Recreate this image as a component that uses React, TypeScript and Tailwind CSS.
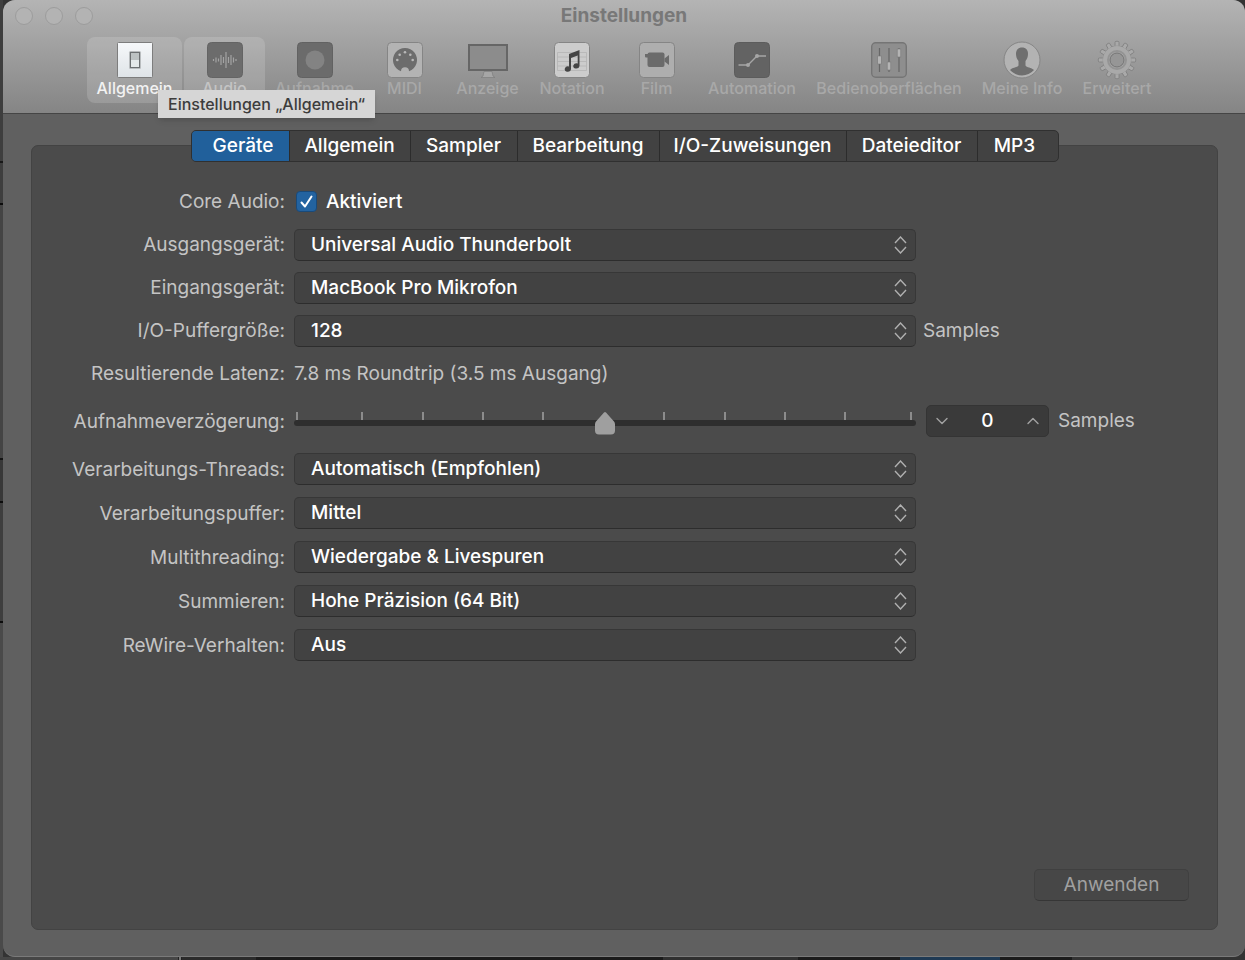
import React, { useState } from 'react';
import { ChevronDown, ChevronUp, Check } from 'lucide-react';
import clsx from 'clsx';

const GeneralIcon = () => (
  <svg width="36" height="36" viewBox="0 0 36 36">
    <defs>
      <linearGradient id="paper" x1="0" y1="0" x2="0" y2="1">
        <stop offset="0" stopColor="#f6f8fa" />
        <stop offset="1" stopColor="#dfe4e8" />
      </linearGradient>
    </defs>
    <rect x="0.5" y="0.5" width="35" height="35" rx="1" fill="url(#paper)" stroke="#7d7d7d" />
    <rect x="12" y="9" width="12" height="18" rx="1.500" fill="#b9bdbf" />
    <rect x="14" y="11" width="8" height="14" fill="#e4e9ea" />
    <rect x="14" y="11" width="8" height="7" fill="#bcc2c3" />
    <rect x="13.5" y="10.5" width="9" height="15" fill="none" stroke="#6c7072" />
  </svg>
);

const AudioIcon = () => (
  <svg width="36" height="36" viewBox="0 0 36 36">
    <rect x="0.5" y="0.5" width="35" height="35" rx="4" fill="#6c6c6c" stroke="#646464" />
    <path
      d="M6.5 17v2M9 15.500v5M11.500 16.500v3M14 13v10M16.500 15v6M19 10v16M21.500 15v6M24 13v10M26.500 15.500v5M29 17v2"
      stroke="#a3a3a3"
      strokeWidth="1.2"
    />
  </svg>
);

const RecordIcon = () => (
  <svg width="36" height="36" viewBox="0 0 36 36">
    <rect x="0.5" y="0.5" width="35" height="35" rx="4" fill="#6b6b6b" stroke="#626262" />
    <circle cx="18" cy="18" r="9.500" fill="#838383" />
  </svg>
);

const MidiIcon = () => (
  <svg width="36" height="36" viewBox="0 0 36 36">
    <rect x="0.5" y="0.5" width="35" height="35" rx="4" fill="#b3b3b3" stroke="#858585" />
    <path d="M14 29.200A12 12 0 1 1 22 29.200A4 4 0 0 0 14 29.200Z" fill="#6c6c6c" />
    <g fill="#b8b8b8">
      <circle cx="10.300" cy="18" r="1.300" />
      <circle cx="12.700" cy="12.700" r="1.300" />
      <circle cx="18" cy="10.300" r="1.300" />
      <circle cx="23.300" cy="12.700" r="1.300" />
      <circle cx="25.700" cy="18" r="1.300" />
    </g>
  </svg>
);

const DisplayIcon = () => (
  <svg width="42" height="36" viewBox="0 0 42 36">
    <rect x="2" y="3" width="38" height="25" fill="#8c8c8c" stroke="#666666" strokeWidth="2" />
    <path d="M17 29.500h8l1 4.500l2 1.500H14l2-1.500z" fill="#a6a6a6" stroke="#7e7e7e" strokeWidth="0.700" />
  </svg>
);

const NotationIcon = () => (
  <svg width="36" height="36" viewBox="0 0 36 36">
    <rect x="0.5" y="0.5" width="35" height="35" rx="4" fill="#cccccc" stroke="#858585" />
    <path d="M3.500 10.500h29M3.500 15h29M3.500 19.500h29M3.500 24h29M3.500 28.500h29M3.500 10.500v18M32.500 10.500v18" stroke="#b4b4b4" strokeWidth="0.800" fill="none" />
    <path d="M15 12L25.500 8V24a3.200 2.600 -15 1 1-1.800-2.600V13.500L17 16V27a3.200 2.600 -15 1 1-2-2.500z" fill="#454545" />
  </svg>
);

const MovieIcon = () => (
  <svg width="36" height="36" viewBox="0 0 36 36">
    <rect x="0.5" y="0.5" width="35" height="35" rx="4" fill="#aeaeae" stroke="#858585" />
    <rect x="8.500" y="10.500" width="17" height="14.500" rx="2" fill="#6b6b6b" />
    <path d="M6 12h4v3.500H7Q6 15.500 6 14.500z" fill="#6b6b6b" />
    <path d="M25.500 16.500l4.500-3.500v10L25.500 19.500z" fill="#6b6b6b" />
  </svg>
);

const AutomationIcon = () => (
  <svg width="36" height="36" viewBox="0 0 36 36">
    <rect x="0.5" y="0.5" width="35" height="35" rx="4" fill="#636363" stroke="#5c5c5c" />
    <path d="M4.500 23H14L23 14H32" stroke="#a6a6a6" strokeWidth="1.300" fill="none" />
    <circle cx="14" cy="23" r="2" fill="#a6a6a6" />
    <circle cx="23" cy="14" r="2" fill="#a6a6a6" />
  </svg>
);

const SurfacesIcon = () => (
  <svg width="36" height="36" viewBox="0 0 36 36">
    <rect x="0.700" y="0.700" width="34.600" height="34.600" rx="4" fill="#8e8e8e" stroke="#757575" strokeWidth="1.400" />
    <path d="M8.500 6v24M18 6v24M28 6v24" stroke="#666666" strokeWidth="1.200" />
    <g fill="#b4b4b4" stroke="#7b7b7b" strokeWidth="0.600">
      <rect x="6.700" y="14" width="3.600" height="8" />
      <rect x="16.200" y="20" width="3.600" height="8" />
      <rect x="26.200" y="7" width="3.600" height="8" />
    </g>
  </svg>
);

const PersonIcon = () => (
  <svg width="38" height="38" viewBox="0 0 38 38">
    <circle cx="19" cy="19" r="18" fill="#b3b3b3" stroke="#858585" />
    <path
      d="M19 6.500c4 0 6 2.500 6 6.500c0 3-1 5-2.500 7v4.500c1 2 6 2 8.500 4.500a16 16 0 0 1-24 0c2.500-2.500 7.500-2.500 8.500-4.500V20C14 18 13 16 13 13c0-4 2-6.500 6-6.500z"
      fill="#6f6f6f"
    />
  </svg>
);

const GearIcon = () => (
  <svg width="40" height="40" viewBox="0 0 40 40">
    <g fill="#a9a9a9" stroke="#7e7e7e" strokeWidth="0.800">
      {Array.from({ length: 12 }, (_, i) => (
        <path key={i} d="M16 8L18 5.500V2.500Q18 1.300 19 1.300H21Q22 1.300 22 2.500V5.500L24 8z" transform={`rotate(${i * 30} 20 20)`} />
      ))}
      <circle cx="20" cy="20" r="13.800" />
    </g>
    <circle cx="20" cy="20" r="14" fill="#a9a9a9" />
    <circle cx="20" cy="20" r="9" fill="none" stroke="#949494" strokeWidth="2" />
    <circle cx="20" cy="20" r="7" fill="#969696" stroke="#747474" />
  </svg>
);

const toolbarItems = [
  { label: 'Allgemein', icon: <GeneralIcon />, width: 'w-[95px]' },
  { label: 'Audio', icon: <AudioIcon />, width: 'w-[81px]' },
  { label: 'Aufnahme', icon: <RecordIcon />, width: 'w-[95px]' },
  { label: 'MIDI', icon: <MidiIcon />, width: 'w-[81px]' },
  { label: 'Anzeige', icon: <DisplayIcon />, width: 'w-[81px]' },
  { label: 'Notation', icon: <NotationIcon />, width: 'w-[84px]' },
  { label: 'Film', icon: <MovieIcon />, width: 'w-[81px]' },
  { label: 'Automation', icon: <AutomationIcon />, width: 'w-[106px]' },
  { label: 'Bedienoberflächen', icon: <SurfacesIcon />, width: 'w-[164px]' },
  { label: 'Meine Info', icon: <PersonIcon />, width: 'w-[98px]' },
  { label: 'Erweitert', icon: <GearIcon />, width: 'w-[88px]' },
];

const tabs = [
  { label: 'Geräte', width: 'w-[98px] pl-[6px]' },
  { label: 'Allgemein', width: 'w-[121px]' },
  { label: 'Sampler', width: 'w-[107px]' },
  { label: 'Bearbeitung', width: 'w-[142px]' },
  { label: 'I/O-Zuweisungen', width: 'w-[187px]' },
  { label: 'Dateieditor', width: 'w-[131px]' },
  { label: 'MP3', width: 'w-[80px] pr-[6px]' },
];

// percent along the track; the outer two steps are a little wider
const ticks = [0.4, 10.8, 20.5, 30.2, 39.9, 59.4, 69.1, 78.8, 88.5, 99];

const Toolbar: React.FC = () => (
  <header className="h-[114px] border-b border-[#454545] bg-linear-to-b from-[#b4b4b4] to-[#858585]">
    <div className="grid grid-cols-[1fr_auto_1fr] items-center h-8 px-3">
      <div className="flex gap-3">
        {['Schließen', 'Minimieren', 'Zoomen'].map(name => (
          <button key={name} aria-label={name} className="size-[18px] rounded-full border border-[#9c9c9c] bg-[#b3b3b3]" />
        ))}
      </div>
      <h1 className="text-[19px] leading-8 font-bold text-[#787878]">Einstellungen</h1>
    </div>
    <nav className="flex justify-center gap-0.5 mt-[5px]">
      {toolbarItems.map(({ label, icon, width }, i) => (
        <button
          key={label}
          className={clsx(
            'relative flex flex-col items-center h-[66px] rounded-lg text-[16px] leading-5 font-medium whitespace-nowrap',
            width,
            i < 2 && 'bg-white/15',
            i === 0 ? 'text-[#f2f2f2]' : i === 1 ? 'text-[#c4c4c4]' : 'text-[#a8a8a8]'
          )}
        >
          <span className="flex items-center justify-center h-[36px] mt-[5px]">{icon}</span>
          <span>{label}</span>
          {i === 0 && (
            <span
              role="tooltip"
              className="absolute z-20 left-[71px] top-[53px] h-[28px] px-[10px] bg-[#d6d6d6] text-[16px] leading-[28px] text-[#3c3c3c] shadow-md"
            >
              Einstellungen „Allgemein“
            </span>
          )}
        </button>
      ))}
    </nav>
  </header>
);

const Row: React.FC<{ label: string; id?: string; height?: string; after?: React.ReactNode; children: React.ReactNode }> = ({
  label,
  id,
  height = 'h-[43px]',
  after,
  children,
}) => (
  <div className={clsx('grid grid-cols-[253px_minmax(0,1fr)_301px] items-center', height)}>
    <label htmlFor={id} className="pt-0.5 text-right whitespace-nowrap">{label}</label>
    <div className="ml-[9px]">{children}</div>
    <div className="flex items-center">{after}</div>
  </div>
);

const Popup: React.FC<{ id: string; value: string }> = ({ id, value }) => (
  <div className="relative">
    <select
      id={id}
      className="block w-full h-8 pl-4 pr-10 pt-px appearance-none rounded-[5px] border border-[#373737] border-b-[#2d2d2d] bg-[#424242] font-[450] text-white"
    >
      <option>{value}</option>
    </select>
    <svg className="absolute right-[9px] top-[7px] pointer-events-none" width="13" height="18" viewBox="0 0 13 18" fill="none" stroke="#b0b0b0" strokeWidth="1.4">
      <path d="M1 7L6.500 1L12 7M1 11L6.500 17L12 11" />
    </svg>
  </div>
);

export default function App() {
  const [activeTab, setActiveTab] = useState('Geräte');
  const [enabled, setEnabled] = useState(true);
  const [delay, setDelay] = useState(0);

  return (
    <div className="flex flex-col min-h-screen bg-[#333] font-['Inter','Liberation_Sans',sans-serif]">
      <div className="flex flex-1">
        {/* edge of the window behind */}
        <div className="flex flex-col w-[3px] bg-[#3e3e3e]">
          <div className="h-[163px] border-b-2 border-[#181818]" />
          <div className="h-[42px] border-b-2 border-[#0c0c0c]" />
          <div className="h-[255px] border-b-2 border-[#141414] bg-[#444]" />
          <div className="h-[43px] border-b-2 border-[#0c0c0c] bg-[#383838]" />
          <div className="h-[120px] border-b-2 border-[#0c0c0c]" />
          <div className="flex-1 bg-[#4a4a4a]" />
        </div>
        <div className="flex flex-col flex-1 min-w-0 rounded-[12px] overflow-hidden bg-[#606060] border-b border-[#7a7a7a]">
          <Toolbar />
          <main className="flex flex-col flex-1 pl-7 pr-[27px] pt-4 pb-[26px] text-[19px] text-[#c4c4c4]">
            <div role="tablist" className="relative z-10 self-center flex h-8 rounded-[5px] border border-[#303030] bg-[#424242] overflow-hidden">
              {tabs.map(({ label, width }) => (
                <button
                  key={label}
                  role="tab"
                  aria-selected={activeTab === label}
                  onClick={() => setActiveTab(label)}
                  className={clsx(
                    'border-r border-[#2c2c2c] last:border-r-0 font-[450] text-white whitespace-nowrap',
                    width,
                    activeTab === label && 'bg-[#21609b]'
                  )}
                >
                  {label}
                </button>
              ))}
            </div>
            <section className="flex flex-col flex-1 -mt-[17px] pt-[34px] rounded-[7px] border border-[#434343] bg-[#4b4b4b]">
              <Row label="Core Audio:" id="core-audio">
                <div className="flex items-center gap-[9px] pl-[2px]">
                  <span className="relative size-[21px]">
                    <input
                      id="core-audio"
                      type="checkbox"
                      checked={enabled}
                      onChange={e => setEnabled(e.target.checked)}
                      className="block size-[21px] appearance-none rounded-[4px] border border-[#1a4a79] bg-[#2363a0]"
                    />
                    {enabled && (
                      <svg className="absolute inset-0 pointer-events-none" width="21" height="21" viewBox="0 0 21 21" fill="none" stroke="#fff" strokeWidth="2" strokeLinecap="round" strokeLinejoin="round">
                        <path d="M5.500 11.500L9 15.500L15.500 5.500" />
                      </svg>
                    )}
                  </span>
                  <label htmlFor="core-audio" className="pt-0.5 font-[450] text-white">Aktiviert</label>
                </div>
              </Row>
              <Row label="Ausgangsgerät:" id="output">
                <Popup id="output" value="Universal Audio Thunderbolt" />
              </Row>
              <Row label="Eingangsgerät:" id="input">
                <Popup id="input" value="MacBook Pro Mikrofon" />
              </Row>
              <Row label="I/O-Puffergröße:" id="buffer" after={<span className="pl-[7px] pt-0.5">Samples</span>}>
                <Popup id="buffer" value="128" />
              </Row>
              <Row label="Resultierende Latenz:">
                <p className="pt-0.5">7.8 ms Roundtrip (3.5 ms Ausgang)</p>
              </Row>
              <Row
                label="Aufnahmeverzögerung:"
                id="delay"
                height="h-[52px]"
                after={
                  <>
                    <div className="flex items-center h-8 w-[123px] ml-[10px] px-[5px] rounded-[5px] border border-[#343434] bg-[#3a3a3a]">
                      <button aria-label="Verringern" onClick={() => setDelay(delay - 1)}>
                        <ChevronDown className="size-5 text-[#a0a0a0]" strokeWidth={1.7} />
                      </button>
                      <input
                        aria-label="Aufnahmeverzögerung in Samples"
                        value={delay}
                        onChange={e => setDelay(Number(e.target.value) || 0)}
                        className="flex-1 min-w-0 bg-transparent text-center font-[450] text-white"
                      />
                      <button aria-label="Erhöhen" onClick={() => setDelay(delay + 1)}>
                        <ChevronUp className="size-5 text-[#a0a0a0]" strokeWidth={1.7} />
                      </button>
                    </div>
                    <span className="pl-[9px]">Samples</span>
                  </>
                }
              >
                <div className="relative h-6 mt-[5px]">
                  {ticks.map(t => (
                    <span key={t} className="absolute top-0 w-0.5 h-2 bg-[#8c8c8c]" style={{ left: `${t}%` }} />
                  ))}
                  <div className="absolute inset-x-0 top-2 h-1.5 rounded-full bg-[#2e2e2e]" />
                  <input
                    id="delay"
                    type="range"
                    min={-5000}
                    max={5000}
                    value={delay}
                    onChange={e => setDelay(Number(e.target.value))}
                    className="relative block w-full h-6 appearance-none bg-transparent [&::-webkit-slider-thumb]:appearance-none [&::-webkit-slider-thumb]:w-5 [&::-webkit-slider-thumb]:h-6 [&::-webkit-slider-thumb]:bg-[#9f9f9f] [&::-webkit-slider-thumb]:[clip-path:path('M9_1Q10_0_11_1L19_10Q20_11_20_13V19Q20_23_16_23H4Q0_23_0_19V13Q0_11_1_10Z')]"
                  />
                </div>
              </Row>
              <Row label="Verarbeitungs-Threads:" id="threads" height="h-11">
                <Popup id="threads" value="Automatisch (Empfohlen)" />
              </Row>
              <Row label="Verarbeitungspuffer:" id="range" height="h-11">
                <Popup id="range" value="Mittel" />
              </Row>
              <Row label="Multithreading:" id="multithreading" height="h-11">
                <Popup id="multithreading" value="Wiedergabe & Livespuren" />
              </Row>
              <Row label="Summieren:" id="summing" height="h-11">
                <Popup id="summing" value="Hohe Präzision (64 Bit)" />
              </Row>
              <Row label="ReWire-Verhalten:" id="rewire" height="h-11">
                <Popup id="rewire" value="Aus" />
              </Row>
              <button
                disabled
                className="self-end mt-auto mr-7 mb-7 h-8 w-[155px] pt-px rounded-[5px] border border-[#404040] border-b-[#363636] bg-[#474747] text-[#a0a0a0]"
              >
                Anwenden
              </button>
            </section>
          </main>
        </div>
      </div>
      <div className="flex h-[3px]">
        <div className="w-[178px] bg-[#464646]" />
        <div className="w-1 border-x border-[#222] bg-[#777]" />
        <div className="w-[74px] bg-[#2b2b2b]" />
        <div className="w-[407px] bg-[#1b1b1b]" />
        <div className="w-[135px] bg-[#303030]" />
        <div className="w-[102px] bg-[#1c1c1c]" />
        <div className="w-[100px] bg-[#1f3a54]" />
        <div className="w-[72px] bg-[#1c1c1c]" />
      </div>
    </div>
  );
}
